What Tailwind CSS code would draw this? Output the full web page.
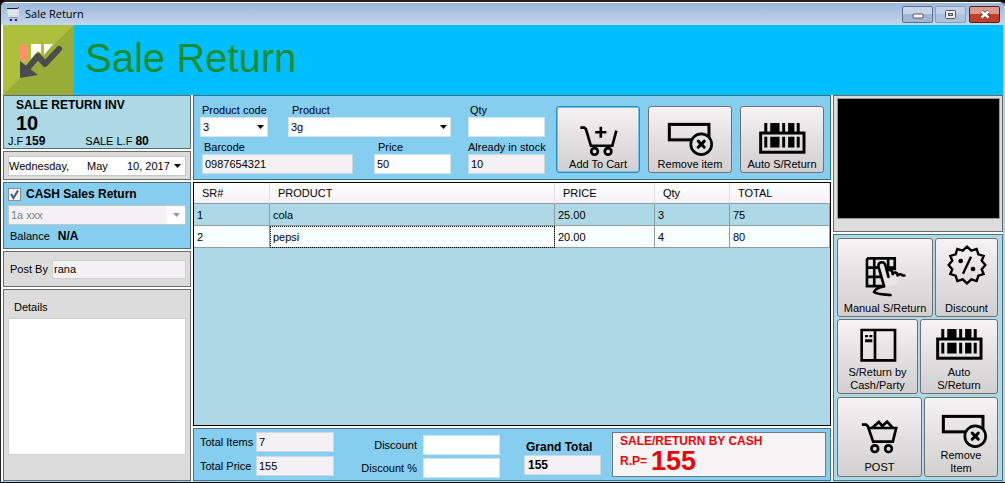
<!DOCTYPE html>
<html lang="en">
<head>
<meta charset="utf-8">
<title>Sale Return</title>
<script src="https://cdn.jsdelivr.net/npm/@tailwindcss/browser@4"></script>
</head>
<body class="h-screen overflow-hidden bg-black pb-px font-['Liberation_Sans',Arial,sans-serif] text-[11px] leading-[14px] text-black">
<svg class="hidden" aria-hidden="true">
  <symbol id="barcode" viewBox="626 84 142 96">
    <rect x="631" y="117" width="131" height="58" fill="none" stroke="black" stroke-width="9"/>
    <path d="M642 87h9v30h-9zM660 87h28v30h-28zM696 87h9v30h-9zM714 87h19v30h-19zM740 87h9v30h-9zM642 128h9v33h-9zM660 128h28v33h-28zM696 128h9v33h-9zM714 128h19v33h-19zM740 128h9v33h-9z"/>
  </symbol>
  <symbol id="remove" viewBox="354 84 140 104">
    <rect x="361" y="91" width="118" height="46" fill="none" stroke="black" stroke-width="9"/>
    <circle cx="456" cy="150" r="31" fill="#e2e2e2" stroke="black" stroke-width="8"/>
    <path d="M447 141l18 18M465 141l-18 18" stroke="black" stroke-width="9" stroke-linecap="round"/>
  </symbol>
</svg>
<div class="flex h-full flex-col overflow-hidden rounded-t-md border border-t-2 border-[#a5dcf5] border-l-[#222] border-t-[#222]">
  <header class="flex h-[23px] shrink-0 items-center border-t border-white bg-linear-to-b from-[#9db7d9] to-[#c3d6ee] pr-1 pl-[5px]">
    <svg class="mr-[5px] h-[15px] w-[14px]" viewBox="0 0 14 15"><path d="M1 2h10l2-1v9H2z" fill="#d9dee4"/><path d="M1 1.500h10l2-1" fill="none" stroke="#222"/><path d="M2 4h9M2 7h9" stroke="#eef1f4"/><path d="M3 10.500h9" stroke="#999"/><circle cx="5" cy="13" r="1.300" fill="#334"/><circle cx="10" cy="13" r="1.300" fill="#334"/></svg>
    <span class="flex-1 font-['Open_Sans',sans-serif] text-[11px]">Sale Return</span>
    <div class="flex gap-[2px]">
      <button aria-label="Minimize" class="flex h-[17px] w-[31px] items-center justify-center rounded-[2px] border border-[#5f6f88] bg-linear-to-b from-[#c5d5ea] from-50% to-[#9fb6d5] to-50%"><svg class="mt-1 h-[6px] w-[12px]" viewBox="0 0 12 6"><rect x="1" y="1" width="10" height="4" rx="1" fill="white" stroke="#555"/></svg></button>
      <button aria-label="Maximize" class="flex h-[17px] w-[31px] items-center justify-center rounded-[2px] border border-[#8c9db8] bg-linear-to-b from-[#bfd0e8] from-50% to-[#adc2df] to-50%"><svg class="h-[9px] w-[11px]" viewBox="0 0 11 9"><rect x=".5" y=".5" width="10" height="8" rx="1" fill="#eee" stroke="#555"/><rect x="3.500" y="3.500" width="4" height="2" fill="#adc2df" stroke="#555"/></svg></button>
      <button aria-label="Close" class="ml-px flex h-[17px] w-[31px] items-center justify-center rounded-[2px] border border-[#5a1d1d] bg-linear-to-b from-[#dd9a8c] from-50% to-[#c0402b] to-50%"><svg class="h-[9px] w-[12px]" viewBox="0 0 12 9"><path d="M2.500 1.500l7 6M9.500 1.500l-7 6" stroke="#444" stroke-width="4"/><path d="M2.500 1.500l7 6M9.500 1.500l-7 6" stroke="white" stroke-width="2.400"/></svg></button>
    </div>
  </header>

  <div class="flex min-h-0 flex-1 flex-col border-r border-l-2 border-r-[#8fdcfa] border-l-white bg-white">
    <div class="flex h-[70px] shrink-0 items-center bg-[#00bfff]">
      <svg class="h-[70px] w-[71px]" viewBox="0 0 71 70"><path d="M0 0h71v70H0z" fill="#acc03e"/><path d="M71 0v70H0z" fill="#9aac38"/><rect x="17" y="19" width="8" height="17" rx="3" fill="#ff9167"/><path d="M28 19h10v9l-3-2-7 8zM41 19h9l-9 11z" fill="white"/><path d="M56 24L42 39l-7-8-11 13" fill="none" stroke="#4b4b4d" stroke-width="6" stroke-linejoin="round" stroke-linecap="round"/><path d="M17 36v17l18-3z" fill="#4b4b4d"/></svg>
      <h1 class="ml-[11px] pb-[5px] text-[40px] leading-[44px] text-[#1a8c2c]">Sale Return</h1>
    </div>

    <main class="grid min-h-0 flex-1 grid-cols-[188px_minmax(0,1fr)_170px] gap-[2px]">
      <aside class="flex min-h-0 flex-col gap-[2px]">
        <section class="h-[54px] border border-[#5c6b73] bg-[#add8e6] px-1 pt-[2px]">
          <h2 class="ml-2 text-[12px] font-bold">SALE RETURN INV</h2>
          <p class="ml-2 text-[20px] leading-[22px] font-bold">10</p>
          <p class="flex items-baseline gap-[2px]"><span>J.F</span><b class="text-[12px]">159</b><span class="ml-[38px]">SALE L.F</span><b class="ml-px text-[12px]">80</b></p>
        </section>
        <section class="h-[29px] border border-[#6b6b6b] bg-[#dcdcdc] px-1 pt-1">
          <button aria-label="Invoice date" class="flex h-[20px] w-full items-center border border-[#c8c8c8] bg-white pr-1"><span class="w-[78px] text-left">Wednesday,</span><span class="w-[40px] text-left">May</span><span class="flex-1 text-left">10, 2017</span><svg class="h-1 w-[7px]" viewBox="0 0 7 4"><path d="M0 0h7L3.500 4z"/></svg></button>
        </section>
        <section class="h-[67px] border border-[#4f6f80] bg-[#85ceef] px-1 pt-[4px]">
          <label class="flex h-[14px] items-center gap-[5px] text-[12px] font-bold"><span class="grid"><input type="checkbox" checked class="col-start-1 row-start-1 h-[13px] w-[13px] appearance-none border border-[#8e8f8f] bg-[#f4f4f4]"><svg class="pointer-events-none col-start-1 row-start-1 h-[13px] w-[13px]" viewBox="0 0 13 13"><path d="M3 6l2.500 4L10 2.500" fill="none" stroke="#3c5a9e" stroke-width="2"/></svg></span>CASH Sales Return</label>
          <div class="mt-1 grid items-center">
            <select disabled aria-label="Cash account" class="col-start-1 row-start-1 h-[20px] w-full appearance-none border border-[#c4c4c4] bg-[#f4f1f4] px-[2px] text-[#808080] opacity-100"><option>1a xxx</option></select>
            <span class="pointer-events-none col-start-1 row-start-1 mr-px grid h-[18px] w-[18px] place-items-center justify-self-end bg-white"><svg class="h-1 w-[7px]" viewBox="0 0 7 4"><path d="M0 0h7L3.500 4z" fill="#999"/></svg></span>
          </div>
          <p class="mt-1 ml-[2px] flex items-center gap-2"><span>Balance</span><b class="text-[12px]">N/A</b></p>
        </section>
        <section class="flex h-[36px] items-center gap-1 border border-[#6b6b6b] bg-[#dcdcdc] pr-1 pl-[6px]">
          <label for="post" class="w-[38px]">Post By</label>
          <input id="post" value="rana" class="h-[19px] min-w-0 flex-1 border border-[#d0d0d0] bg-[#f4f1f4] px-px">
        </section>
        <section class="min-h-0 flex-1 border border-[#6b6b6b] bg-[#dcdcdc] px-1 pt-[10px]">
          <label for="details" class="ml-[6px] block">Details</label>
          <textarea id="details" class="mt-1 block h-[137px] w-full resize-none border border-[#d0d0d0] bg-white"></textarea>
        </section>
      </aside>

      <div class="flex min-h-0 flex-col gap-[2px]">
        <section class="flex h-[85px] border border-[#35718c] bg-[#85ceef] pl-[6px]">
          <form class="w-[345px] pt-[7px]">
            <div class="flex items-end">
              <div class="w-[68px]"><label for="code" class="block pl-[2px] whitespace-nowrap">Product code</label>
                <div class="grid items-center"><select id="code" class="col-start-1 row-start-1 h-[20px] w-full appearance-none border border-[#d4e4ec] bg-white px-[2px]"><option>3</option></select><svg class="pointer-events-none col-start-1 row-start-1 mr-1 h-1 w-[7px] justify-self-end" viewBox="0 0 7 4"><path d="M0 0h7L3.500 4z"/></svg></div></div>
              <div class="ml-5 w-[163px]"><label for="product" class="block pl-1">Product</label>
                <div class="grid items-center"><select id="product" class="col-start-1 row-start-1 h-[20px] w-full appearance-none border border-[#d4e4ec] bg-white px-[2px]"><option>3g</option></select><svg class="pointer-events-none col-start-1 row-start-1 mr-1 h-1 w-[7px] justify-self-end" viewBox="0 0 7 4"><path d="M0 0h7L3.500 4z"/></svg></div></div>
              <div class="ml-[17px] w-[77px]"><label for="qty" class="block pl-[2px]">Qty</label><input id="qty" class="block h-[20px] w-full border border-[#d4e4ec] bg-white px-[2px]"></div>
            </div>
            <div class="mt-[3px] ml-[2px] flex">
              <div class="w-[151px]"><label for="barcodeno" class="block pl-[2px]">Barcode</label><input id="barcodeno" value="0987654321" class="block h-[20px] w-full border border-[#cfd8e0] bg-[#f4f1f4] px-[2px]"></div>
              <div class="ml-[21px] w-[77px]"><label for="price" class="block pl-1">Price</label><input id="price" value="50" class="block h-[20px] w-full border border-[#d4e4ec] bg-white px-[2px]"></div>
              <div class="ml-[17px] w-[77px]"><label for="stock" class="block whitespace-nowrap">Already in stock</label><input id="stock" value="10" class="block h-[20px] w-full border border-[#cfd8e0] bg-[#f4f1f4] px-[2px]"></div>
            </div>
          </form>
          <div class="ml-[11px] flex gap-2 pt-[10px]">
            <button class="flex h-[67px] w-[84px] flex-col items-center justify-end rounded-[3px] border border-[#2b8cc4] bg-linear-to-b from-[#f7f3f5] via-[#e2e0e1] via-50% to-[#d2cfd0] pb-px ring-1 ring-[#6cc0ea] ring-inset"><svg class="h-[33px] w-[39px]" viewBox="84 84 116 100"><path d="M87 95h12l5 5 15 50h65l12-46" fill="none" stroke="black" stroke-width="8"/><path d="M149 92v34M132 109h34" stroke="black" stroke-width="8"/><circle cx="130" cy="167" r="10" fill="none" stroke="black" stroke-width="8"/><circle cx="171" cy="167" r="10" fill="none" stroke="black" stroke-width="8"/></svg>Add To Cart</button>
            <button class="flex h-[67px] w-[84px] flex-col items-center justify-end rounded-[3px] border border-[#707070] bg-linear-to-b from-[#f7f3f5] via-[#e2e0e1] via-50% to-[#d2cfd0] pb-px"><svg class="h-[35px] w-[47px]"><use href="#remove"/></svg>Remove item</button>
            <button class="flex h-[67px] w-[84px] flex-col items-center justify-end rounded-[3px] border border-[#707070] bg-linear-to-b from-[#f7f3f5] via-[#e2e0e1] via-50% to-[#d2cfd0] pb-px"><svg class="mb-[3px] h-[32px] w-[47px]"><use href="#barcode"/></svg>Auto S/Return</button>
          </div>
        </section>

        <section class="min-h-0 flex-1 border border-black bg-[#add8e6]">
          <table class="w-full table-fixed border-separate border-spacing-0">
            <colgroup><col class="w-[76px]"><col><col class="w-[100px]"><col class="w-[75px]"><col class="w-[100px]"></colgroup>
            <thead><tr class="h-[21px] bg-linear-to-b from-white to-[#f4f1f6] text-left *:border-r *:border-b *:border-r-[#e0dfe6] *:border-b-[#8e9ba3] *:pl-2 *:font-normal"><th>SR#</th><th>PRODUCT</th><th>PRICE</th><th>Qty</th><th>TOTAL</th></tr></thead>
            <tbody>
              <tr class="h-[22px] *:border-r *:border-b *:border-[#8e9ba3] *:pl-[3px]"><td>1</td><td>cola</td><td>25.00</td><td>3</td><td>75</td></tr>
              <tr class="h-[22px] bg-[#f8ffff] *:border-r *:border-b *:border-[#8e9ba3] *:pl-[3px]"><td>2</td><td class="outline-1 -outline-offset-1 outline-black outline-dotted">pepsi</td><td>20.00</td><td>4</td><td>80</td></tr>
            </tbody>
          </table>
        </section>

        <section class="flex h-[53px] border border-[#4f6f80] bg-[#85ceef] pl-[6px]">
          <div class="grid w-[134px] grid-cols-[56px_78px] content-start items-center gap-y-[4px] pt-[3px]">
            <label for="items">Total Items</label><input id="items" value="7" class="h-[20px] w-full border border-[#cfd8e0] bg-[#f4f1f4] px-[2px]">
            <label for="totalprice">Total Price</label><input id="totalprice" value="155" class="h-[20px] w-full border border-[#cfd8e0] bg-[#f4f1f4] px-[2px]">
          </div>
          <div class="ml-[26px] grid w-[140px] grid-cols-[57px_77px] content-start items-center gap-x-[6px] gap-y-[3px] pt-[6px]">
            <label for="disc" class="text-right">Discount</label><input id="disc" class="h-[20px] w-full border border-[#d4e4ec] bg-white px-[2px]">
            <label for="discp" class="text-right whitespace-nowrap">Discount %</label><input id="discp" class="h-[20px] w-full border border-[#d4e4ec] bg-white px-[2px]">
          </div>
          <div class="ml-[24px] w-[77px] pt-[11px] text-[12px] font-bold">
            <label for="grand" class="block pl-[2px]">Grand Total</label><input id="grand" value="155" class="mt-px block h-[20px] w-full border border-[#cfd8e0] bg-[#f4f1f4] px-[3px]">
          </div>
          <div class="mt-[3px] mr-1 ml-[11px] h-[45px] flex-1 border border-[#6f7b82] bg-[#f6f4f5] pt-px pl-[7px] text-[12px] font-bold whitespace-nowrap text-[#e80707]">
            <p>SALE/RETURN BY CASH</p>
            <p class="flex items-center gap-1 leading-[26px]">R.P= <span class="text-[27px]">155</span></p>
          </div>
        </section>
      </div>

      <aside class="flex min-h-0 flex-col gap-[2px]">
        <section class="h-[137px] border border-[#6b6b6b] bg-[#dcdcdc] p-[2px] pl-[3px]"><div class="h-[121px] w-[163px] border border-[#999] bg-black"></div></section>
        <section class="flex min-h-0 flex-1 flex-col gap-[2px] border border-[#4f6f80] bg-[#add8e6] py-[3px] pr-1 pl-[3px]">
          <div class="flex h-[79px] gap-[2px]">
            <button class="flex w-[96px] flex-col items-center justify-end rounded-[3px] border border-[#707070] bg-linear-to-b from-[#f7f3f5] via-[#e2e0e1] via-50% to-[#d2cfd0] pb-px"><svg class="mb-1 h-[41px] w-[41px]" viewBox="104 92 122 124"><path d="M109 99h84v32h-20M109 99v84h46M109 127h84M109 155h46M131 99v84M173 99v28" fill="none" stroke="black" stroke-width="8"/><path d="M162 184l-18-58c-3-19 17-21 21-6l9 34 34 0-4 20-40 14z" fill="#e7e5e6"/><path d="M161 184l-17-58c-3-18 17-20 21-5l9 34M172 135c10-3 14 2 15 12 3-8 14-6 15 4 5-6 12-4 14 0h6M160 184c-15 2-25 8-30 17 10 8 32 7 50 9" fill="none" stroke="black" stroke-width="8" stroke-linecap="round" stroke-linejoin="round"/></svg>Manual S/Return</button>
            <button class="flex min-w-0 flex-1 flex-col items-center justify-end rounded-[3px] border border-[#707070] bg-linear-to-b from-[#f7f3f5] via-[#e2e0e1] via-50% to-[#d2cfd0] pb-px"><svg class="mb-4 h-[40px] w-[40px]" viewBox="-60 -60 120 120"><path d="M0-55L13-43L29-48L34-32L50-27L44-13L55 0L44 13L50 27L34 32L29 48L13 43L0 55L-13 43L-29 48L-34 32L-50 27L-44 13L-55 0L-44-13L-50-27L-34-32L-29-48L-13-43Z" fill="none" stroke="black" stroke-width="7"/><path d="M12-25L-12 26" stroke="black" stroke-width="7"/><circle cx="-19" cy="-12" r="7"/><circle cx="18" cy="12" r="7"/></svg>Discount</button>
          </div>
          <div class="flex h-[76px] gap-[2px]">
            <button class="flex w-[81px] flex-col items-center justify-end rounded-[3px] border border-[#707070] bg-linear-to-b from-[#f7f3f5] via-[#e2e0e1] via-50% to-[#d2cfd0] pb-px leading-[13px]"><svg class="mb-1 h-[34px] w-[38px]" viewBox="84 312 112 102"><path d="M91 318h100v91H91zM131 318v91" fill="none" stroke="black" stroke-width="8"/><path d="M101 333h9v7h-9zM114 333h9v7h-9zM101 346h22v9h-22z"/></svg>S/Return by<br>Cash/Party</button>
            <button class="flex min-w-0 flex-1 flex-col items-center justify-end rounded-[3px] border border-[#707070] bg-linear-to-b from-[#f7f3f5] via-[#e2e0e1] via-50% to-[#d2cfd0] pb-px leading-[13px]"><svg class="mb-[6px] h-[32px] w-[47px]"><use href="#barcode"/></svg>Auto<br>S/Return</button>
          </div>
          <div class="mt-px flex h-[80px] gap-[2px]">
            <button class="flex w-[85px] flex-col items-center justify-end rounded-[3px] border border-[#707070] bg-linear-to-b from-[#f7f3f5] via-[#e2e0e1] via-50% to-[#d2cfd0] pb-[2px]"><svg class="mb-[6px] h-[34px] w-[37px]" viewBox="92 586 110 102"><path d="M94 600h13l5 5 16 46h59l10-41h-80" fill="none" stroke="black" stroke-width="8"/><path d="M124 611l21-19 14 17M148 595l7 8M155 604l15-13 17 19" fill="none" stroke="black" stroke-width="8"/><circle cx="133" cy="672" r="10" fill="none" stroke="black" stroke-width="8"/><circle cx="174" cy="672" r="10" fill="none" stroke="black" stroke-width="8"/></svg>POST</button>
            <button class="flex min-w-0 flex-1 flex-col items-center justify-end rounded-[3px] border border-[#707070] bg-linear-to-b from-[#f7f3f5] via-[#e2e0e1] via-50% to-[#d2cfd0] pb-px leading-[13px]"><svg class="ml-[6px] h-[35px] w-[47px]"><use href="#remove"/></svg>Remove<br>Item</button>
          </div>
        </section>
      </aside>
    </main>
  </div>
</div>
</body>
</html>
